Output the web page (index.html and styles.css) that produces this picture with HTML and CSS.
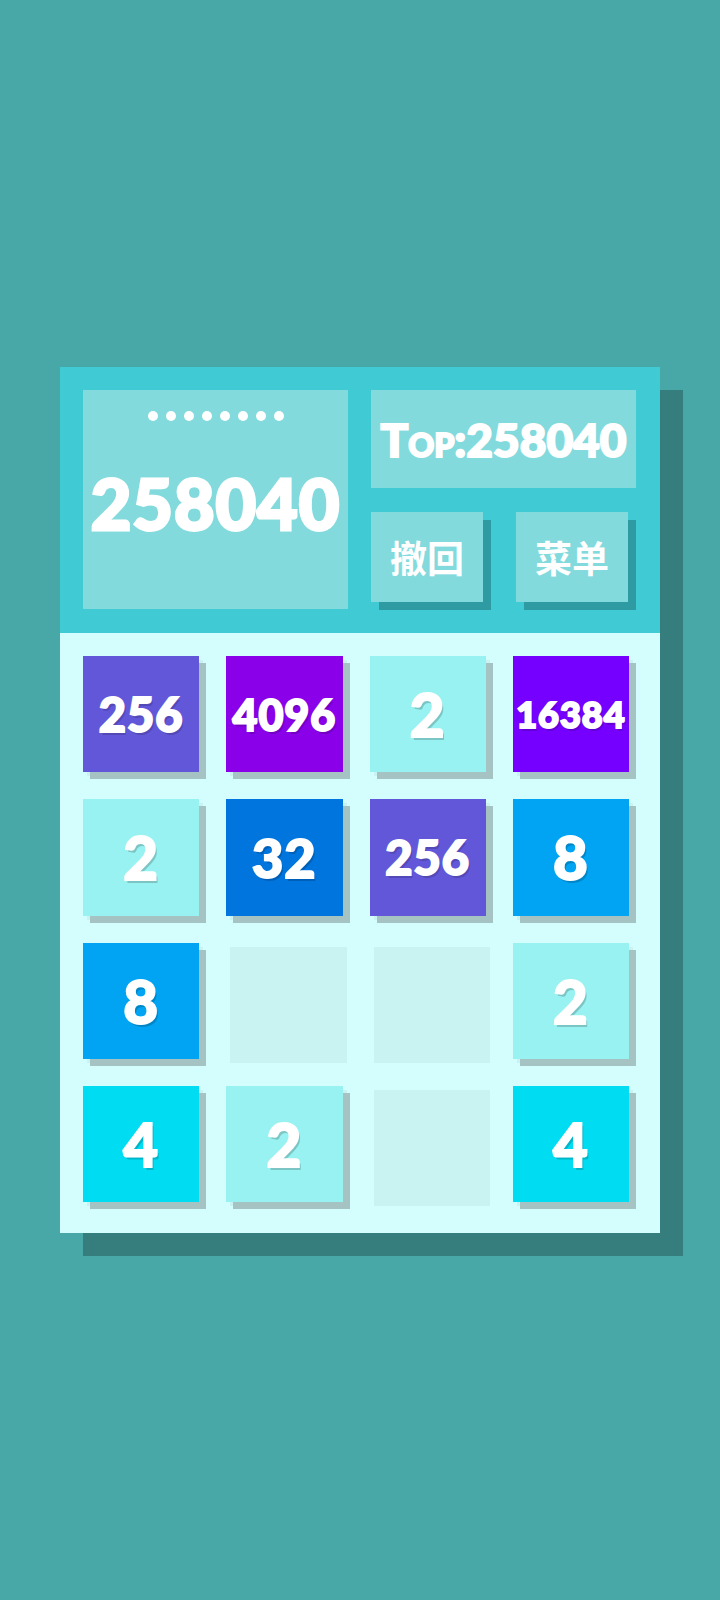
FILE: index.html
```html
<!DOCTYPE html>
<html lang="zh">

<head>
    <meta charset="UTF-8">
    <meta name="viewport" content="width=device-width, initial-scale=1.0">
    <title>2048</title>
    <link rel="stylesheet" href="styles.css">
</head>

<body>
    <div class="game">
        <div class="header">
            <div class="score-box">
                <div class="player">
                    <span class="dot"></span><span class="dot"></span><span class="dot"></span><span class="dot"></span>
                    <span class="dot"></span><span class="dot"></span><span class="dot"></span><span class="dot"></span>
                </div>
                <div class="score">258040</div>
            </div>
            <div class="side">
                <div class="best">Top:258040</div>
                <div class="actions">
                    <button type="button" class="btn">撤回</button>
                    <button type="button" class="btn">菜单</button>
                </div>
            </div>
        </div>

        <div class="board">
            <div class="cell"><div class="tile t256 len3">256</div></div>
            <div class="cell"><div class="tile t4096 len4">4096</div></div>
            <div class="cell"><div class="tile t2 len1">2</div></div>
            <div class="cell"><div class="tile t16384 len5">16384</div></div>

            <div class="cell"><div class="tile t2 len1">2</div></div>
            <div class="cell"><div class="tile t32 len2">32</div></div>
            <div class="cell"><div class="tile t256 len3">256</div></div>
            <div class="cell"><div class="tile t8 len1">8</div></div>

            <div class="cell"><div class="tile t8 len1">8</div></div>
            <div class="cell"></div>
            <div class="cell"></div>
            <div class="cell"><div class="tile t2 len1">2</div></div>

            <div class="cell"><div class="tile t4 len1">4</div></div>
            <div class="cell"><div class="tile t2 len1">2</div></div>
            <div class="cell"></div>
            <div class="cell"><div class="tile t4 len1">4</div></div>
        </div>
    </div>
</body>

</html>
```

FILE: styles.css
```css
body {
    margin: 0;
    height: 1600px;
    background-color: #48a7a7;
    display: flex;
    align-items: center;
    justify-content: center;
    font-family: Lato, "Noto Sans CJK SC", sans-serif;
    color: white;
}

.game {
    width: 600px;
    box-shadow: 23px 23px 0 #357e7d;
}

/* top panel: score on the left, best score and buttons on the right */
.header {
    display: grid;
    grid-template-columns: 265px 265px;
    gap: 23px;
    height: 266px;
    box-sizing: border-box;
    padding: 23px 24px 24px 23px;
    background-color: #40cad3;
}

.score-box {
    background-color: #82dadd;
    display: flex;
    flex-direction: column;
    align-items: center;
}

.player {
    display: flex;
    gap: 8px;
    margin-top: 21px;
}

.dot {
    width: 10px;
    height: 10px;
    border-radius: 50%;
    background: white;
}

.score {
    margin-top: 42px;
    font-size: 70px;
    font-weight: 900;
    line-height: 80px;
    letter-spacing: 1px;
    -webkit-text-stroke: 3px white;
}

.side {
    display: flex;
    flex-direction: column;
    gap: 24px;
}

.best {
    height: 98px;
    background-color: #82dadd;
    display: flex;
    align-items: center;
    justify-content: center;
    font-size: 46px;
    font-weight: 900;
    font-variant: small-caps;
    -webkit-text-stroke: 2px white;
}

.actions {
    display: flex;
    justify-content: space-between;
    padding-right: 8px;
}

.btn {
    width: 112px;
    height: 90px;
    border: none;
    padding: 0;
    background-color: #82dadd;
    box-shadow: 8px 8px 0 #2d9ba1;
    color: white;
    font-family: "Noto Sans CJK SC", sans-serif;
    font-size: 37px;
    font-weight: 700;
    cursor: pointer;
}

/* 4x4 playing field */
.board {
    display: grid;
    grid-template-columns: repeat(4, 1fr);
    gap: 27px;
    height: 600px;
    box-sizing: border-box;
    padding: 27px;
    background-color: #d4fdfd;
}

.cell {
    background-color: #c9f3f2;
}

.tile {
    width: 100%;
    height: 100%;
    transform: translate(-4px, -4px);
    box-shadow: 7px 7px 0 #a6c3c4;
    display: flex;
    align-items: center;
    justify-content: center;
    font-weight: 900;
    letter-spacing: 1px;
    -webkit-text-stroke: 2px white;
    text-shadow: 2px 3px 0 rgba(0, 0, 0, 0.18);
}

.len1 { font-size: 60px; }
.len2 { font-size: 54px; }
.len3 { font-size: 47px; }
.len4 { font-size: 43px; }
.len5 { font-size: 36px; }

.t2 { background-color: #97f2f1; }
.t4 { background-color: #00ddf3; }
.t8 { background-color: #00a4f3; }
.t32 { background-color: #0075de; }
.t256 { background-color: #6257d9; }
.t4096 { background-color: #8a00e8; }
.t16384 { background-color: #7600ff; }
```
